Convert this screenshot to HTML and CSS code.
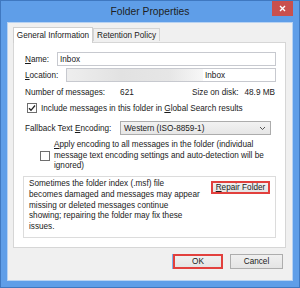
FILE: index.html
```html
<!DOCTYPE html>
<html>
<head>
<meta charset="utf-8">
<link rel="stylesheet" href="styles.css">
</head>
<body>
<div class="window">
  <div class="titlebar">
    <span class="title">Folder Properties</span>
    <div class="close"><svg width="7" height="7" viewBox="0 0 7 7"><path d="M1 1L6 6M6 1L1 6" stroke="#fff" stroke-width="1.4"/></svg></div>
  </div>
  <div class="client">
    <div class="tabs">
      <div class="tab active">General Information</div>
      <div class="tab">Retention Policy</div>
    </div>
    <div class="panel">
      <div class="row field">
        <span class="lbl lbl-name"><u>N</u>ame:</span>
        <div class="input">Inbox</div>
      </div>
      <div class="row field loc">
        <span class="lbl lbl-loc"><u>L</u>ocation:</span>
        <div class="input"><span class="blur"></span><span>Inbox</span></div>
      </div>
      <div class="row stats">
        <div class="stat"><span>Number of messages:</span><span class="val">621</span></div>
        <div class="stat"><span>Size on disk:</span><span class="val2">48.9 MB</span></div>
      </div>
      <div class="row check-row">
        <span class="cb checked"><svg width="8" height="8" viewBox="0 0 8 8"><path d="M1 4.2L3 6.3L7 1.5" fill="none" stroke="#222" stroke-width="1.3"/></svg></span>
        <span>Include messages in this folder in <u>G</u>lobal Search results</span>
      </div>
      <div class="row enc-row">
        <span class="lbl lbl-enc">Fallback Text <u>E</u>ncoding:</span>
        <div class="select"><span>Western (ISO-8859-1)</span><svg width="7" height="5" viewBox="0 0 7 5"><path d="M1 1L3.5 3.5L6 1" fill="none" stroke="#555" stroke-width="1"/></svg></div>
      </div>
      <div class="row apply-row">
        <span class="cb"></span>
        <span class="apply-text"><u>A</u>pply encoding to all messages in the folder (individual<br>message text encoding settings and auto-detection will be<br>ignored)</span>
      </div>
      <div class="group">
        <p class="group-text">Sometimes the folder index (.msf) file<br>becomes damaged and messages may appear<br>missing or deleted messages continue<br>showing; repairing the folder may fix these<br>issues.</p>
        <button class="btn repair"><u>R</u>epair Folder</button>
      </div>
    </div>
    <div class="buttons">
      <button class="btn ok">OK</button>
      <button class="btn cancel">Cancel</button>
    </div>
  </div>
</div>
</body>
</html>
```
FILE: styles.css
```css
html, body {
  margin: 0;
  padding: 0;
}
body {
  width: 300px;
  height: 288px;
  overflow: hidden;
  font-family: "Liberation Sans", Arial, sans-serif;
  font-size: 8.2px;
  color: #1a1a1a;
}
u { text-decoration: underline; text-underline-offset: 1px; }
.window {
  box-sizing: border-box;
  width: 300px;
  height: 288px;
  background: #5f9ee8;
  border: 1px solid #3f78c0;
  padding: 0 6px 6px 6px;
  display: flex;
  flex-direction: column;
  position: relative;
}
.titlebar {
  height: 21px;
  flex: none;
  display: flex;
  align-items: center;
  justify-content: center;
  font-size: 10.3px;
  color: #1e1e1e;
}
.close {
  position: absolute;
  top: 0;
  right: 6px;
  width: 21px;
  height: 15px;
  background: #c9504d;
  display: flex;
  align-items: center;
  justify-content: center;
}
.client {
  flex: 1;
  background: #f0f0f0;
  border: 1px solid #b7d2f2;
  padding: 4px 6px 0 5px;
  display: flex;
  flex-direction: column;
}
.tabs {
  display: flex;
  align-items: flex-end;
  height: 15px;
  position: relative;
  z-index: 1;
}
.tab {
  box-sizing: border-box;
  height: 13px;
  padding: 0 3px;
  border: 1px solid #d4d4d4;
  border-bottom: none;
  background: #f0f0f0;
  display: flex;
  align-items: center;
  margin-bottom: 1px;
  color: #1a1a1a;
  white-space: nowrap;
}
.tab.active {
  height: 16px;
  width: 80px;
  padding: 0;
  background: #fff;
  margin-bottom: -1px;
  justify-content: center;
  border-color: #cfcfcf;
}
.panel {
  height: 206px;
  box-sizing: border-box;
  background: #fff;
  border: 1px solid #d6d6d6;
  padding: 9px 9px 0 11px;
  display: flex;
  flex-direction: column;
}
.row {
  display: flex;
  align-items: center;
}
.field {
  height: 14px;
}
.loc { margin-top: 2px; }
.lbl-name { width: 32px; flex: none; }
.lbl-loc { width: 41px; flex: none; }
.input {
  flex: 1;
  box-sizing: border-box;
  height: 14px;
  border: 1px solid #c7c9cf;
  display: flex;
  align-items: center;
  padding-left: 2px;
}
.loc .input { padding-left: 0; }
.blur {
  width: 136px;
  height: 12px;
  margin-right: 2px;
  background: linear-gradient(90deg, #eeeeee 0%, #e2e2e2 40%, #e6e6e6 75%, #f7f7f7 100%);
}
.stats {
  margin-top: 4px;
  height: 12px;
  justify-content: space-between;
  padding-right: 1px;
}
.stat { display: flex; }
.val { margin-left: 15px; }
.val2 { margin-left: 6px; }
.check-row {
  margin-top: 4px;
  height: 12px;
  padding-left: 2px;
}
.cb {
  box-sizing: border-box;
  width: 10px;
  height: 10px;
  border: 1px solid #6e6e6e;
  background: #fff;
  flex: none;
  margin-right: 4px;
  display: flex;
  align-items: center;
  justify-content: center;
}
.enc-row {
  margin-top: 7px;
  height: 14px;
}
.lbl-enc { width: 95px; flex: none; }
.select {
  box-sizing: border-box;
  width: 151px;
  height: 14px;
  border: 1px solid #acacac;
  background: linear-gradient(#f2f2f2, #e6e6e6);
  display: flex;
  align-items: center;
  justify-content: space-between;
  padding: 0 4px 0 3px;
}
.apply-row {
  margin-top: 5px;
  padding-left: 15px;
  line-height: 10.7px;
}
.group {
  margin-top: 4px;
  margin-left: -2px;
  height: 62px;
  box-sizing: border-box;
  border: 1px solid #dcdcdc;
  display: flex;
  justify-content: space-between;
  align-items: flex-start;
  padding: 2px 5px 0 5px;
}
.group-text {
  margin: 0;
  line-height: 10.7px;
}
.btn {
  font-family: inherit;
  font-size: 8.2px;
  color: #1a1a1a;
  box-sizing: border-box;
  background: linear-gradient(#f0f0f0, #e4e4e4);
  border: 1px solid #adadad;
  padding: 0;
  margin: 0;
}
.repair {
  margin-top: 2px;
  width: 59px;
  height: 13px;
  border: 2px solid #e2403d;
}
.buttons {
  margin-top: 6px;
  display: flex;
  justify-content: flex-end;
  gap: 7px;
  padding-right: 3px;
}
.ok {
  width: 50px;
  height: 15px;
  border: 2px solid #e2403d;
  box-shadow: -1px 0 0 0 #7fb3ea;
}
.cancel {
  width: 53px;
  height: 15px;
}
```
